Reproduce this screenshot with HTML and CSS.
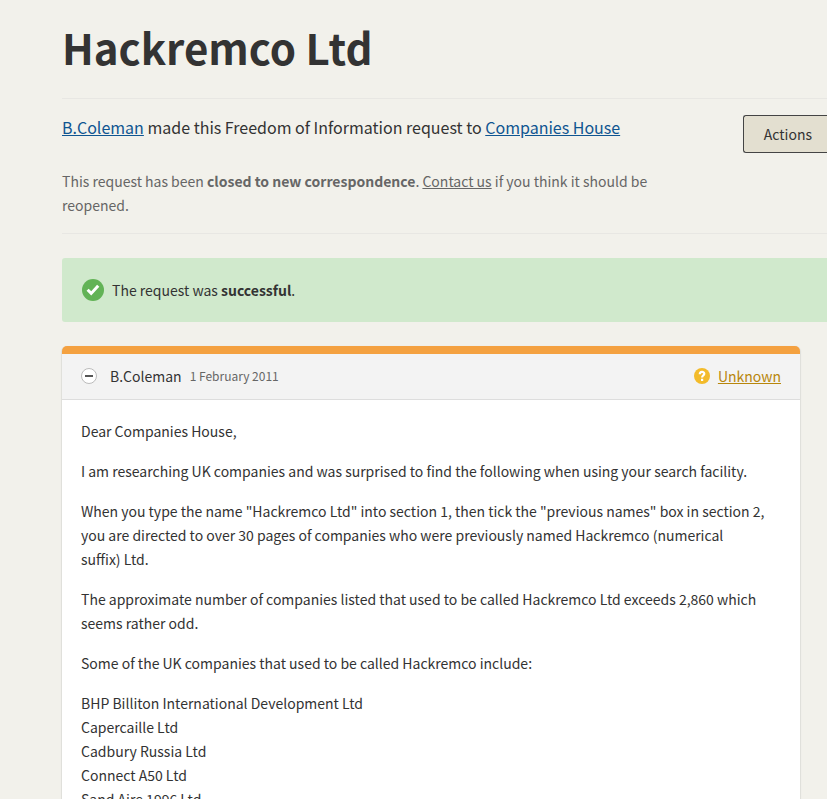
FILE: index.html
```html
<!DOCTYPE html>
<html lang="en">

<head>
    <meta charset="UTF-8">
    <meta name="viewport" content="width=device-width, initial-scale=1.0">
    <title>Hackremco Ltd</title>
    <link rel="stylesheet" href="styles.css">
</head>

<body>
    <main class="request">
        <header class="request__header">
            <h1 class="request__title">Hackremco Ltd</h1>
            <div class="request__intro">
                <div class="request__summary">
                    <p class="request__subtitle"><a href="#">B.Coleman</a> made this Freedom of Information request to <a href="#">Companies House</a></p>
                    <p class="request__closed">This request has been <strong>closed to new correspondence</strong>. <a href="#">Contact us</a> if you think it should be reopened.</p>
                </div>
                <button type="button" class="request__actions">Actions</button>
            </div>
        </header>

        <p class="status">
            <svg class="status__icon" viewBox="0 0 22 22" aria-hidden="true">
                <circle cx="11" cy="11" r="11" fill="#62b356"/>
                <path d="M5.6 10.8l3.6 3.6 7-7.6" fill="none" stroke="#fff" stroke-width="3"/>
            </svg>
            <span>The request was <strong>successful</strong>.</span>
        </p>

        <article class="message">
            <div class="message__header">
                <button type="button" class="message__toggle" aria-label="Collapse message">
                    <svg viewBox="0 0 16 16" aria-hidden="true">
                        <circle cx="8" cy="8" r="7.5" fill="#fff" stroke="#bbb"/>
                        <path d="M4 8h8" stroke="#555" stroke-width="2"/>
                    </svg>
                </button>
                <span class="message__author">B.Coleman</span>
                <time class="message__date" datetime="2011-02-01">1 February 2011</time>
                <a href="#" class="message__delivery">
                    <svg viewBox="0 0 16 16" aria-hidden="true">
                        <circle cx="8" cy="8" r="8" fill="#f3bb2a"/>
                        <path d="M5.8 6.2c0-3 4.5-3 4.5-.4 0 1.7-2.2 1.6-2.2 3.7M8.1 10.7v2.3" fill="none" stroke="#fff" stroke-width="2.2"/>
                    </svg>
                    <span>Unknown</span>
                </a>
            </div>
            <div class="message__body">
                <p>Dear Companies House,</p>
                <p>I am researching UK companies and was surprised to find the following when using your search facility.</p>
                <p>When you type the name "Hackremco Ltd" into section 1, then tick the "previous names" box in section 2, you are directed to over 30 pages of companies who were previously named Hackremco (numerical suffix)&nbsp;Ltd.</p>
                <p>The approximate number of companies listed that used to be called Hackremco Ltd exceeds 2,860 which seems rather odd.</p>
                <p>Some of the UK companies that used to be called Hackremco include:</p>
                <p>BHP Billiton International Development Ltd<br>
                    Capercaille Ltd<br>
                    Cadbury Russia Ltd<br>
                    Connect A50 Ltd<br>
                    Sand Aire 1996 Ltd</p>
            </div>
        </article>
    </main>
</body>

</html>
```
FILE: styles.css
```css
*,
*:before,
*:after {
    box-sizing: border-box;
}

html {
    overflow-x: hidden;
    scrollbar-width: none;
}

body {
    margin: 0;
    background: #f2f1eb;
    color: #333;
    font-family: "Noto Sans CJK SC", "Open Sans", sans-serif;
    font-size: 14px;
    line-height: 24px;
}

p {
    margin: 0;
}

.request {
    padding: 22px 0 0 62px;
}

.request__title {
    margin: 0;
    padding-bottom: 26px;
    border-bottom: 1px solid #e8e7e3;
    font-size: 42px;
    line-height: 50px;
    font-weight: 700;
}

.request__intro {
    display: flex;
    justify-content: space-between;
    align-items: flex-start;
    padding: 16px 0;
    border-bottom: 1px solid #e8e7e3;
}

.request__summary {
    max-width: 600px;
}

.request__subtitle {
    font-size: 16px;
}

.request__subtitle a {
    color: #0f5591;
}

.request__closed {
    margin-top: 30px;
    color: #666;
}

.request__closed a {
    color: inherit;
}

.request__actions {
    padding: 6px 15px 6px 20px;
    border: 1px solid #444;
    border-right: 0;
    border-radius: 3px 0 0 3px;
    background: #e3dfd0;
    color: #333;
    font: inherit;
    cursor: pointer;
}

.status {
    display: flex;
    align-items: center;
    gap: 8px;
    margin: 24px 0;
    padding: 20px;
    border-radius: 3px 0 0 3px;
    background: #d0e9cc;
}

.status__icon {
    width: 22px;
    height: 22px;
}

.message {
    margin-right: 27px;
    border-top: 8px solid #f4a140;
    border-radius: 5px 5px 0 0;
    background: #fff;
    box-shadow: 0 1px 1px 1px #dededa;
}

.message__header {
    display: flex;
    align-items: center;
    padding: 10px 19px 11px;
    border-bottom: 1px solid #ddd;
    background: #f3f3f3;
}

.message__toggle {
    display: flex;
    margin-right: 13px;
    padding: 0;
    border: 0;
    background: none;
    cursor: pointer;
}

.message__header svg {
    width: 16px;
    height: 16px;
}

.message__date {
    margin-left: 8px;
    font-size: 12px;
    color: #666;
}

.message__delivery {
    display: flex;
    align-items: center;
    gap: 8px;
    margin-left: auto;
    color: #b8860b;
    text-decoration: none;
}

.message__delivery span {
    text-decoration: underline;
}

.message__body {
    padding: 19px;
}

.message__body p {
    margin-bottom: 16px;
}
```
